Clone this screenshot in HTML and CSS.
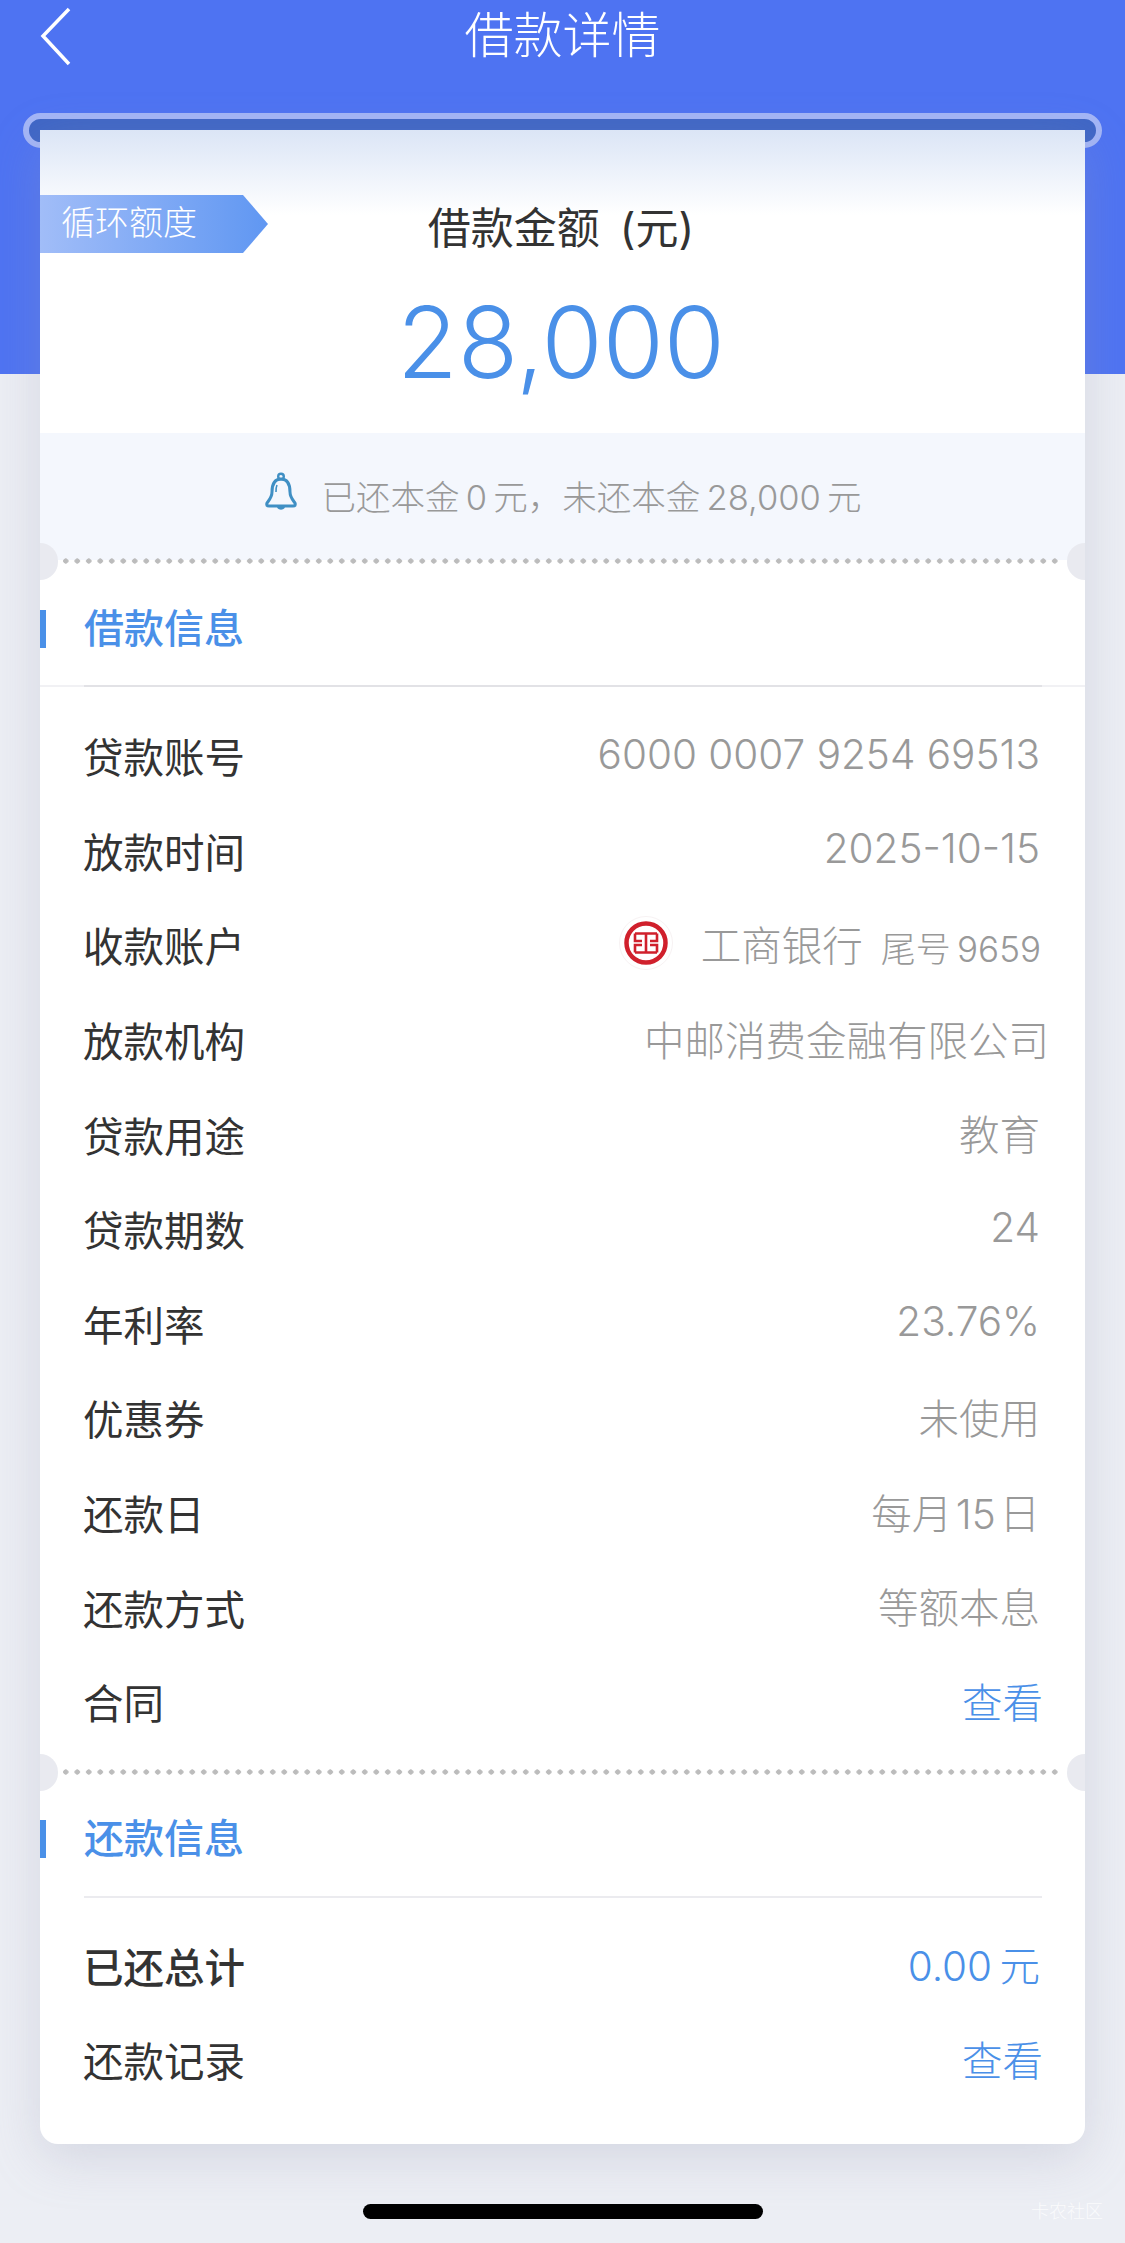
FILE: index.html
```html
<!DOCTYPE html>
<html lang="zh-CN">
<head>
  <meta charset="UTF-8">
  <meta name="viewport" content="width=device-width, initial-scale=1.0">
  <title>借款详情</title>
  <link rel="stylesheet" href="styles.css">
</head>
<body>
  <div class="page">
    <div class="topbar">
      <svg class="back" width="36" height="60" viewBox="0 0 36 60">
        <path d="M32 3 L6 30 L32 58" fill="none" stroke="#fff" stroke-width="3.5"/>
      </svg>
      <h1 class="title">借款详情</h1>
    </div>

    <div class="slot"></div>

    <div class="card">
      <!-- Amount -->
      <div class="hero">
        <div class="tag">循环额度</div>
        <div class="hero-label">借款金额 (元)</div>
        <div class="hero-amount">28,000</div>
      </div>

      <div class="notice">
        <svg class="bell" width="36" height="40" viewBox="0 0 36 40">
          <path d="M18 7 C10 7 9 14 9 20 C9 25 7 27 4 31 C3 33 4 34 6 34 L30 34 C32 34 33 33 32 31 C29 27 27 25 27 20 C27 14 26 7 18 7 Z" fill="none" stroke="#3f8fc4" stroke-width="3"/>
          <circle cx="18" cy="4.5" r="2.8" fill="none" stroke="#3f8fc4" stroke-width="2.4"/>
          <path d="M14 35 C15 38.5 21 38.5 22 35 Z" fill="#3f8fc4"/>
          <path d="M14 13 C13 15 13 17 13 20" fill="none" stroke="#3f8fc4" stroke-width="1.6"/>
        </svg>
        <span class="notice-text">已还本金&#8201;0&#8201;元，未还本金&#8201;28,000&#8201;元</span>
      </div>

      <div class="sep"><i class="notch notch-l"></i><i class="notch notch-r"></i></div>

      <!-- Loan info -->
      <div class="sec-head"><h2>借款信息</h2></div>
      <div class="sec-line sec-line-full"></div>
      <div class="rows rows-loan">
        <div class="row"><span class="label">贷款账号</span><span class="value">6000 0007 9254 69513</span></div>
        <div class="row"><span class="label">放款时间</span><span class="value">2025-10-15</span></div>
        <div class="row">
          <span class="label">收款账户</span>
          <span class="value bank">
            <svg class="bank-logo" width="54" height="54" viewBox="0 0 54 54">
              <circle cx="27" cy="27" r="26.5" fill="#fff" stroke="#f7f2f3"/>
              <circle cx="27" cy="27" r="19.5" fill="none" stroke="#d0202c" stroke-width="4.5"/>
              <path d="M16 17.5 H38 M16 17.5 V25 H23 M38 17.5 V25 H31 M27 17.5 V36.5 M16 36.5 H38 M16 36.5 V29 H23 M38 36.5 V29 H31" fill="none" stroke="#d0202c" stroke-width="2.6"/>
            </svg>
            <span class="bank-name">工商银行</span>
            <span class="bank-tail">尾号&#8201;9659</span>
          </span>
        </div>
        <div class="row"><span class="label">放款机构</span><span class="value value-wide">中邮消费金融有限公司</span></div>
        <div class="row"><span class="label">贷款用途</span><span class="value">教育</span></div>
        <div class="row"><span class="label">贷款期数</span><span class="value">24</span></div>
        <div class="row"><span class="label">年利率</span><span class="value">23.76%</span></div>
        <div class="row"><span class="label">优惠券</span><span class="value">未使用</span></div>
        <div class="row"><span class="label">还款日</span><span class="value">每月&#8202;15&#8202;日</span></div>
        <div class="row"><span class="label">还款方式</span><span class="value">等额本息</span></div>
        <div class="row"><span class="label">合同</span><span class="value link link-look">查看</span></div>
      </div>

      <div class="sep"><i class="notch notch-l"></i><i class="notch notch-r"></i></div>

      <!-- Repayment info -->
      <div class="sec-head"><h2>还款信息</h2></div>
      <div class="sec-line"></div>
      <div class="rows rows-repay">
        <div class="row"><span class="label label-strong">已还总计</span><span class="value link">0.00&#8201;元</span></div>
        <div class="row"><span class="label">还款记录</span><span class="value link link-look">查看</span></div>
      </div>
    </div>

    <div class="home-bar"></div>
    <div class="watermark">卡农社区</div>
  </div>
</body>
</html>
```

FILE: styles.css
```css
body {
  margin: 0;
  padding: 0;
  font-family: "Inter", "Noto Sans CJK SC", sans-serif;
}

.page {
  position: relative;
  height: 2243px;
  overflow: hidden;
  background: linear-gradient(#4e73f2 374px, #eceef4 374px);
}

/* Top bar */
.topbar {
  height: 113px;
  display: grid;
  grid-template-columns: 1fr auto 1fr;
  align-items: start;
  padding-left: 37px;
  padding-right: 37px;
  box-sizing: border-box;
}

.back {
  margin-top: 6px;
}

.title {
  margin: 0;
  font-size: 49px;
  font-weight: 300;
  line-height: 72px;
  color: #fff;
}

.slot {
  height: 35px;
  margin: 0 23px;
  border: 6px solid #a3b5f6;
  border-radius: 18px;
  background-color: #3f66c6;
  box-sizing: border-box;
}

/* Card */
.card {
  position: relative;
  margin: -18px 40px 0;
  background-color: #fff;
  border-radius: 0 0 18px 18px;
  box-shadow: 0 14px 50px rgba(150, 155, 180, 0.28);
}

.hero {
  position: relative;
  height: 303px;
  padding-top: 68px;
  box-sizing: border-box;
  text-align: center;
  background: linear-gradient(#dbe5f6, #fff 85px);
}

.tag {
  position: absolute;
  left: 0;
  top: 65px;
  width: 228px;
  height: 58px;
  padding-left: 21px;
  box-sizing: border-box;
  text-align: left;
  font-size: 34px;
  font-weight: 300;
  line-height: 56px;
  color: #fff;
  background: linear-gradient(90deg, #a1bdf8, #6097f2);
  clip-path: polygon(0 0, 203px 0, 100% 50%, 203px 100%, 0 100%);
}

.hero-label {
  padding-right: 3px;
  font-size: 43px;
  font-weight: 400;
  word-spacing: 8px;
  line-height: 60px;
  color: #333;
}

.hero-amount {
  margin-top: 24px;
  padding-right: 3px;
  font-size: 99px;
  font-weight: 350;
  line-height: 120px;
  color: #4a90e8;
}

.notice {
  height: 127px;
  display: flex;
  align-items: center;
  justify-content: center;
  gap: 22px;
  background-color: #f4f7fd;
  font-size: 34.5px;
  font-weight: 300;
  color: #999;
}

.notice-text {
  margin-bottom: 3px;
}

.bell {
  margin-bottom: 10px;
}

.sep {
  position: relative;
  height: 6px;
  margin-top: -2px;
  background: radial-gradient(circle, #bcbcbc 2.4px, transparent 2.9px) 20px 0 / 11.5px 6px repeat-x;
  background-origin: border-box;
  background-clip: content-box;
  padding: 0 23px;
  box-sizing: border-box;
}

.notch {
  position: absolute;
  top: -15px;
  width: 18px;
  height: 37px;
  background-color: #e9eaf0;
}

.notch-l {
  left: 0;
  border-radius: 0 19px 19px 0;
}

.notch-r {
  right: 0;
  border-radius: 19px 0 0 19px;
}

/* Section headings */
.sec-head {
  height: 121px;
  padding-top: 8px;
  display: flex;
  align-items: center;
  box-sizing: border-box;
}

.sec-head h2 {
  margin: 0;
  padding-left: 38px;
  border-left: 6px solid #4a90e8;
  font-size: 40px;
  font-weight: 500;
  line-height: 38px;
  color: #4a90e8;
}

.sec-line {
  height: 2px;
  margin: 0 43px 0 44px;
  background-color: #ebebef;
}

.sec-line-full {
  margin: 0;
  background: linear-gradient(90deg, #f1f1f4 44px, #e2e2e6 44px, #e2e2e6 calc(100% - 43px), #f1f1f4 calc(100% - 43px));
}

/* Rows */
.rows-loan {
  padding: 23px 0 20px;
}

.rows-repay {
  padding: 22px 0 35px;
}

.row {
  height: 94.6px;
  display: flex;
  align-items: center;
  justify-content: space-between;
  padding: 0 45px 0 43px;
}

.label {
  margin-bottom: 3px;
  font-size: 40.5px;
  font-weight: 400;
  color: #333;
}

.label-strong {
  font-weight: 500;
}

.value {
  margin-bottom: 6px;
  font-size: 40.5px;
  font-weight: 300;
  color: #999;
}

.value-wide {
  margin-right: -9px;
}

.link {
  color: #4a90e8;
}

.link-look {
  margin-right: -3px;
}

.bank {
  display: flex;
  align-items: center;
  margin-right: -1px;
}

.bank-logo {
  margin-right: 28px;
}

.bank-tail {
  margin-left: 18px;
  margin-top: 6px;
  font-size: 35px;
}

/* Bottom */
.home-bar {
  width: 400px;
  height: 15px;
  margin: 60px auto 0;
  border-radius: 8px;
  background-color: #000;
}

.watermark {
  position: absolute;
  right: 22px;
  bottom: 20px;
  font-size: 18px;
  font-weight: 300;
  color: rgba(255, 255, 255, 0.75);
}
```
